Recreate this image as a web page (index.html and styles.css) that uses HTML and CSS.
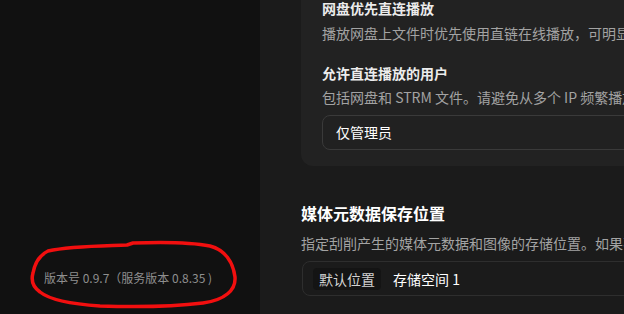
FILE: index.html
```html
<!DOCTYPE html>
<html lang="zh-CN">
<head>
    <meta charset="UTF-8">
    <meta name="viewport" content="width=device-width, initial-scale=1.0">
    <title>设置</title>
    <link rel="stylesheet" href="styles.css">
</head>
<body>
    <div class="layout">
        <aside class="sidebar">
            <div class="version">版本号 0.9.7（服务版本 0.8.35 )</div>
            <svg class="mark" width="260" height="314" viewBox="0 0 260 314">
                <path d="M33 273 C35 262 40 255 48 251 C70 246 100 246 127 245 L133 243 C160 242 190 242 210 246 C225 250 233 262 235 277 C236 290 225 300 203 303 C170 307 130 307 100 306 C70 304 50 300 40 292 C33 287 31 280 33 273 Z" fill="none" stroke="#f20f0f" stroke-width="3.5" stroke-linejoin="round"/>
            </svg>
        </aside>
        <main class="content">
            <section class="card">
                <div class="item-title">网盘优先直连播放</div>
                <div class="item-desc">播放网盘上文件时优先使用直链在线播放，可明显减少服务器流量消耗</div>
                <div class="item-title second">允许直连播放的用户</div>
                <div class="item-desc tight">包括网盘和 STRM 文件。请避免从多个 IP 频繁播放同一文件</div>
                <div class="select">仅管理员</div>
            </section>
            <section class="group">
                <h2 class="group-title">媒体元数据保存位置</h2>
                <div class="group-desc">指定刮削产生的媒体元数据和图像的存储位置。如果不指定则保存在默认位置</div>
                <div class="field">
                    <span class="tag">默认位置</span>
                    <span class="value">存储空间 1</span>
                </div>
            </section>
        </main>
    </div>
</body>
</html>
```

FILE: styles.css
```css
* {
    margin: 0;
    padding: 0;
    box-sizing: border-box;
    font-family: "Noto Sans CJK SC", "Noto Sans", sans-serif;
}

html, body {
    width: 100%;
    height: 100%;
    overflow: hidden;
    background: #1b1b1b;
}

.layout {
    display: flex;
    height: 100%;
}

.sidebar {
    position: relative;
    width: 260px;
    flex-shrink: 0;
    background: #111111;
    display: flex;
    flex-direction: column;
    justify-content: flex-end;
    padding: 0 0 25px 44px;
}

.version {
    font-size: 12px;
    line-height: 22px;
    color: #8f8f8f;
    white-space: nowrap;
}

.mark {
    position: absolute;
    top: 0;
    left: 0;
    pointer-events: none;
}

.content {
    flex: 1;
    min-width: 0;
    padding-left: 41px;
    margin-top: -19px;
    white-space: nowrap;
}

.card {
    background: #222222;
    border-radius: 0 0 0 12px;
    padding: 16px 0 16px 21px;
    margin-right: -40px;
}

.item-title {
    font-size: 14px;
    font-weight: bold;
    line-height: 22px;
    color: #ececec;
}

.item-title.second {
    margin-top: 18px;
}

.item-desc {
    font-size: 14px;
    line-height: 22px;
    color: #a3a3a3;
    margin-top: 3px;
}

.item-desc.tight {
    margin-top: 2px;
}

.select {
    margin-top: 7px;
    height: 35px;
    border: 1px solid #3a3a3a;
    border-radius: 8px;
    background: #212121;
    padding-left: 13px;
    font-size: 14px;
    line-height: 33px;
    color: #ffffff;
}

.group {
    padding-top: 35px;
    margin-right: -40px;
}

.group-title {
    font-size: 16px;
    font-weight: bold;
    line-height: 24px;
    color: #ffffff;
}

.group-desc {
    font-size: 14px;
    line-height: 22px;
    color: #a3a3a3;
    margin-top: 7px;
}

.field {
    margin-top: 7px;
    margin-left: 1px;
    height: 35px;
    border: 1px solid #2e2e2e;
    border-radius: 8px;
    background: #1b1b1b;
    display: flex;
    align-items: center;
    gap: 12px;
    padding-left: 10px;
}

.tag {
    background: #141414;
    color: #d2d2d2;
    font-size: 14px;
    line-height: 22px;
    padding: 0 6px;
    border-radius: 4px;
}

.value {
    color: #ffffff;
    font-size: 14px;
}
```
